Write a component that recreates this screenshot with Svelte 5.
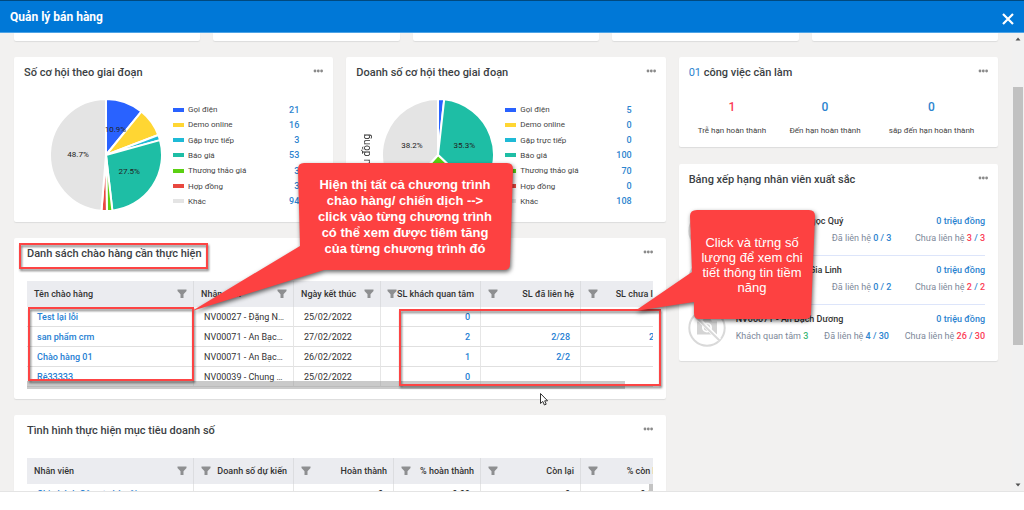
<script>
    const sliceColors = ["#2962ff", "#ffd633", "#1fbad6", "#1ebea5", "#5bd012", "#e8483f", "#e4e4e4"];
    const stages = ["Gọi điện", "Demo online", "Gặp trực tiếp", "Báo giá", "Thương thảo giá", "Hợp đồng", "Khác"];

    const charts = [
        { title: "Số cơ hội theo giai đoạn", values: [21, 16, 3, 53, 3, 3, 94], unit: "" },
        { title: "Doanh số cơ hội theo giai đoạn", values: [5, 0, 0, 100, 70, 0, 108], unit: "triệu đồng" },
    ];

    const tasks = [
        { count: 1, label: "Trễ hạn hoàn thành", late: true, grow: 4 },
        { count: 0, label: "Đến hạn hoàn thành", late: false, grow: 3 },
        { count: 0, label: "sắp đến hạn hoàn thành", late: false, grow: 5 },
    ];

    const staff = [
        { name: "NV00027 - Đặng Ngọc Quý", interested: 3, contacted: [0, 3], pending: [3, 3] },
        { name: "NV00039 - Chung Gia Linh", interested: 3, contacted: [0, 2], pending: [2, 2] },
        { name: "NV00071 - An Bạch Dương", interested: 3, contacted: [4, 30], pending: [26, 30] },
    ];

    const offerColumns = [
        { label: "Tên chào hàng", width: 167 },
        { label: "Nhân viên", width: 100 },
        { label: "Ngày kết thúc", width: 87 },
        { label: "SL khách quan tâm", width: 100, numeric: true },
        { label: "SL đã liên hệ", width: 100, numeric: true },
        { label: "SL chưa liên hệ", width: 103, numeric: true },
    ];

    const offers = [
        { name: "Test lại lỗi", owner: "NV00027 - Đặng Ngọc Quý", end: "25/02/2022", leads: "0", done: "", left: "" },
        { name: "san phẩm crm", owner: "NV00071 - An Bạch Dương", end: "27/02/2022", leads: "2", done: "2/28", left: "26/28" },
        { name: "Chào hàng 01", owner: "NV00071 - An Bạch Dương", end: "26/02/2022", leads: "1", done: "2/2", left: "" },
        { name: "Rê33333", owner: "NV00039 - Chung Gia Linh", end: "25/02/2022", leads: "0", done: "", left: "" },
    ];

    const goalColumns = [
        { label: "Nhân viên", width: 167 },
        { label: "Doanh số dự kiến", width: 100, numeric: true },
        { label: "Hoàn thành", width: 100, numeric: true },
        { label: "% hoàn thành", width: 87, numeric: true },
        { label: "Còn lại", width: 100, numeric: true },
        { label: "% còn lại", width: 88, numeric: true },
    ];

    function slices(values) {
        const total = values.reduce((a, b) => a + b, 0);
        let start = 0;
        return values
            .map((value, i) => {
                const from = start;
                start += value / total;
                return { from, to: start, share: value / total, color: sliceColors[i] };
            })
            .filter((s) => s.share > 0);
    }

    function point(share, r) {
        const a = share * 2 * Math.PI;
        return [56 + r * Math.sin(a), 56 - r * Math.cos(a)];
    }

    function arc({ from, to, share }) {
        const [x1, y1] = point(from, 56);
        const [x2, y2] = point(to, 56);
        return `M56 56 L${x1} ${y1} A56 56 0 ${share > 0.5 ? 1 : 0} 1 ${x2} ${y2} Z`;
    }
</script>

{#snippet more()}
    <button class="more" aria-label="Tùy chọn">
        <svg width="10" height="4" viewBox="0 0 10 4">
            <circle cx="2" cy="2" r="1.4" />
            <circle cx="5.3" cy="2" r="1.4" />
            <circle cx="8.6" cy="2" r="1.4" />
        </svg>
    </button>
{/snippet}

{#snippet head(columns)}
    <colgroup>
        {#each columns as col}
            <col style:width="{col.width}px" />
        {/each}
    </colgroup>
    <thead>
        <tr>
            {#each columns as col}
                <th>
                    <div class="th" class:numeric={col.numeric}>
                        <span>{col.label}</span>
                        <svg class="funnel" width="10" height="10" viewBox="0 0 10 10">
                            <path d="M0.5 0.5H9.5V2L6.5 5.2V9H3.5V5.2L0.5 2Z" />
                        </svg>
                    </div>
                </th>
            {/each}
        </tr>
    </thead>
{/snippet}

<div class="app">
    <header>
        <h1>Quản lý bán hàng</h1>
        <button class="close" aria-label="Đóng">
            <svg width="12" height="12" viewBox="0 0 12 12">
                <path d="M1 1L11 11M11 1L1 11" />
            </svg>
        </button>
    </header>

    <div class="body">
        <main>
            <div class="summary">
                {#each Array(5) as _}
                    <div class="card"></div>
                {/each}
            </div>

            <div class="dashboard">
                <div class="left">
                    <div class="charts">
                        {#each charts as chart}
                            <section class="card chart-card">
                                <div class="card-head">
                                    <h2>{chart.title}</h2>
                                    {@render more()}
                                </div>
                                <div class="chart">
                                    <span class="unit">{chart.unit}</span>
                                    <svg class="pie" width="112" height="112" viewBox="0 0 112 112">
                                        {#each slices(chart.values) as slice}
                                            <path d={arc(slice)} fill={slice.color} />
                                        {/each}
                                        {#each slices(chart.values) as slice}
                                            {#if slice.share > 0.1}
                                                {@const [x, y] = point((slice.from + slice.to) / 2, 28)}
                                                <text {x} y={y + 3}>{(slice.share * 100).toFixed(1)}%</text>
                                            {/if}
                                        {/each}
                                    </svg>
                                    <ul class="legend">
                                        {#each stages as stage, i}
                                            <li>
                                                <i style:background={sliceColors[i]}></i>
                                                <span>{stage}</span>
                                                <b>{chart.values[i]}</b>
                                            </li>
                                        {/each}
                                    </ul>
                                </div>
                            </section>
                        {/each}
                    </div>

                    <section class="card table-card">
                        <div class="card-head">
                            <h2>Danh sách chào hàng cần thực hiện</h2>
                            {@render more()}
                        </div>
                        <div class="grid-wrap">
                            <table>
                                {@render head(offerColumns)}
                                <tbody>
                                    {#each offers as offer}
                                        <tr>
                                            <td><a href="#offer">{offer.name}</a></td>
                                            <td>{offer.owner}</td>
                                            <td>{offer.end}</td>
                                            <td class="num">{offer.leads}</td>
                                            <td class="num">{offer.done}</td>
                                            <td class="num">{offer.left}</td>
                                        </tr>
                                    {/each}
                                </tbody>
                            </table>
                            <div class="hscroll"></div>
                        </div>
                    </section>

                    <section class="card table-card">
                        <div class="card-head">
                            <h2>Tình hình thực hiện mục tiêu doanh số</h2>
                            {@render more()}
                        </div>
                        <div class="grid-wrap">
                            <table>
                                {@render head(goalColumns)}
                                <tbody>
                                    <tr>
                                        <td><a href="#goal">Chi nhánh Công ty hà nội</a></td>
                                        <td class="num"></td>
                                        <td class="num dark">0</td>
                                        <td class="num dark">0.00</td>
                                        <td class="num dark">0</td>
                                        <td class="num dark">0.00</td>
                                    </tr>
                                </tbody>
                            </table>
                            <div class="vscroll"></div>
                        </div>
                    </section>
                </div>

                <div class="right">
                    <section class="card tasks-card">
                        <div class="card-head">
                            <h2><em>01</em> công việc cần làm</h2>
                            {@render more()}
                        </div>
                        <div class="tasks">
                            {#each tasks as task}
                                <div class="task" style:flex-grow={task.grow}>
                                    <strong class:late={task.late}>{task.count}</strong>
                                    <span>{task.label}</span>
                                </div>
                            {/each}
                        </div>
                    </section>

                    <section class="card rank-card">
                        <div class="card-head">
                            <h2>Bảng xếp hạng nhân viên xuất sắc</h2>
                            {@render more()}
                        </div>
                        <ul class="staff">
                            {#each staff as person}
                                <li>
                                    <svg class="avatar" width="38" height="38" viewBox="0 0 38 38">
                                        <circle cx="19" cy="19" r="17.7" fill="#fff" stroke="#d9d9d9" stroke-width="2" />
                                        <path d="M9 12.5h5l1.5-2.5h7l1.5 2.5h5v13H9z" fill="#d4d4d4" />
                                        <circle cx="19" cy="18.5" r="5" fill="#fff" />
                                        <circle cx="19" cy="18.5" r="3.2" fill="#d4d4d4" />
                                        <path d="M7.5 7L31.5 31" stroke="#fff" stroke-width="4" />
                                        <path d="M6.5 7L31.5 31.5" stroke="#d9d9d9" stroke-width="2" />
                                    </svg>
                                    <div class="info">
                                        <div class="line name">
                                            <strong>{person.name}</strong>
                                            <b class="blue">0 triệu đồng</b>
                                        </div>
                                        <div class="line">
                                            <span>Khách quan tâm <b class="green">{person.interested}</b></span>
                                            <span>Đã liên hệ <b class="blue">{person.contacted[0]} / {person.contacted[1]}</b></span>
                                            <span>
                                                Chưa liên hệ <b class="red">{person.pending[0]}</b>
                                                <b class="blue">/</b>
                                                <b class="red">{person.pending[1]}</b>
                                            </span>
                                        </div>
                                    </div>
                                </li>
                            {/each}
                        </ul>
                    </section>
                </div>
            </div>
        </main>

        <div class="scrollbar">
            <svg width="6" height="4" viewBox="0 0 6 4"><path d="M0.5 3.5L3 0.5L5.5 3.5Z" /></svg>
            <div class="thumb"></div>
            <svg width="6" height="4" viewBox="0 0 6 4"><path d="M0.5 0.5L3 3.5L5.5 0.5Z" /></svg>
        </div>
    </div>

    <!-- tutorial annotations laid over the dashboard -->
    <svg class="marks" width="1024" height="510" viewBox="0 0 1024 510">
        <g class="frames">
            <rect x="20" y="244" width="187" height="24" />
            <rect x="29" y="308" width="164" height="72" />
            <rect x="400" y="310" width="260" height="75" />
        </g>
        <g class="bubbles">
            <path d="M304 163H507Q513 163 513 169L510 264Q510 270 504 270H324L192 311L300 246L298 169Q298 163 304 163Z" />
            <path d="M697 210H809Q815 210 815 216L811 313Q811 319 805 319H699Q694 319 694 313V302L635 311L692 272L690 216Q690 210 697 210Z" />
        </g>
        <path class="cursor" d="M540.5 393.5V403.5L542.8 401.4L544.4 405L546.2 404.2L544.7 400.8H547.6Z" />
    </svg>
    <p class="note note-list">
        Hiện thị tất cả chương trình<br />chào hàng/ chiến dịch --&gt;<br />click vào từng chương trình<br />có thể xem
        được tiêm tăng<br />của từng chương trình đó
    </p>
    <p class="note note-count">Click và từng số<br />lượng để xem chi<br />tiết thông tin tiềm<br />năng</p>
</div>

<style>
    :global(body) {
        margin: 0;
        background: #fff;
    }

    .app {
        position: relative;
        height: 100vh;
        overflow: hidden;
        font-family: Roboto, sans-serif;
        font-size: 9px;
        color: #333;
    }

    h1,
    h2,
    p,
    ul {
        margin: 0;
        padding: 0;
        list-style: none;
    }

    button {
        padding: 0;
        border: 0;
        background: none;
        cursor: pointer;
        line-height: 0;
    }

    a {
        color: inherit;
        text-decoration: none;
    }

    header {
        display: flex;
        align-items: center;
        justify-content: space-between;
        box-sizing: border-box;
        height: 33px;
        padding: 0 10px;
        background: #0078d7;
        border-top: 1px solid #00497f;
        border-bottom: 1px solid #4da3e6;
        color: #fff;
    }

    h1 {
        font-size: 12px;
        line-height: 16px;
        font-weight: 700;
    }

    .close {
        padding-top: 4px;
    }

    .close path {
        stroke: #fff;
        stroke-width: 2.2;
    }

    .body {
        display: flex;
        height: calc(100vh - 52px);
        overflow: hidden;
        background: #f2f1f0;
        border-bottom: 1px solid #e4e4e4;
    }

    main {
        flex: 1;
        min-width: 0;
        padding: 0 14px;
    }

    .card {
        background: #fff;
        border-radius: 2px;
        box-shadow: 0 1px 1px #dcdcdc;
    }

    .summary {
        display: grid;
        grid-template-columns: repeat(5, 1fr);
        gap: 13px;
        margin-bottom: 16px;
    }

    .summary .card {
        height: 8px;
        border-radius: 0 0 2px 2px;
    }

    .dashboard {
        display: grid;
        grid-template-columns: repeat(3, minmax(0, 1fr));
        gap: 13px;
    }

    .left {
        grid-column: span 2;
        display: flex;
        flex-direction: column;
        gap: 16px;
    }

    .right {
        display: flex;
        flex-direction: column;
        gap: 17px;
    }

    .charts {
        display: grid;
        grid-template-columns: 1fr 1fr;
        gap: 13px;
    }

    .card-head {
        display: flex;
        justify-content: space-between;
        align-items: flex-start;
        padding: 8px 10px 0;
    }

    h2 {
        font-size: 11px;
        line-height: 16px;
        font-weight: 500;
        color: #3c3f44;
    }

    .more {
        padding-top: 4px;
    }

    .more circle {
        fill: #8a8a8a;
    }

    .chart {
        display: flex;
        padding: 18px 34px 11px 13px;
    }

    .unit {
        width: 16px;
        margin-right: 7px;
        padding-bottom: 2px;
        writing-mode: vertical-rl;
        transform: rotate(180deg);
        text-align: center;
        font-size: 10px;
        line-height: 16px;
    }

    .pie path {
        stroke: #fff;
        stroke-width: 2;
        stroke-linejoin: round;
    }

    .pie text {
        font-size: 8px;
        text-anchor: middle;
        fill: #222;
    }

    .legend {
        flex: 1;
        display: flex;
        flex-direction: column;
        padding: 3px 0 2px 11px;
    }

    .legend li {
        flex: 1;
        display: flex;
        align-items: center;
        color: #444;
        font-size: 8px;
    }

    .legend i {
        width: 11px;
        height: 4px;
        margin-right: 4px;
    }

    .legend b {
        margin-left: auto;
        color: #2d84cf;
        font-size: 9px;
        font-weight: 500;
    }

    .table-card .card-head {
        padding: 8px 13px 0;
    }

    .grid-wrap {
        position: relative;
        margin: 19px 13px 10px;
        height: 108px;
        overflow: hidden;
    }

    table {
        table-layout: fixed;
        width: 100%;
        border-collapse: separate;
        border-spacing: 0;
    }

    th {
        box-sizing: border-box;
        height: 26px;
        padding: 0 6px 0 7px;
        background: #ebecf0;
        border-right: 1px solid #dcdde0;
        font-weight: 500;
    }

    .th {
        display: flex;
        justify-content: space-between;
        align-items: center;
        white-space: nowrap;
    }

    .th.numeric {
        flex-direction: row-reverse;
    }

    .funnel {
        flex: none;
        fill: #8e8f91;
    }

    td {
        box-sizing: border-box;
        height: 20px;
        padding: 0 8px 0 10px;
        overflow: hidden;
        text-overflow: ellipsis;
        white-space: nowrap;
        border-right: 1px solid #e6e6e6;
        border-bottom: 1px solid #e0e0e0;
    }

    td a {
        color: #2680d3;
        font-weight: 500;
    }

    td.num {
        padding-right: 10px;
        text-align: right;
        color: #2680d3;
        font-weight: 500;
    }

    td.dark {
        color: #333;
    }

    .hscroll {
        position: absolute;
        left: 0;
        bottom: 0;
        width: 598px;
        height: 8px;
        background: rgba(150, 150, 150, 0.5);
    }

    .vscroll {
        position: absolute;
        right: 0;
        top: 26px;
        width: 4px;
        height: 60px;
        background: #c4c4c4;
    }

    .tasks {
        display: flex;
        padding: 18px 0 9px;
    }

    .task {
        flex: 1 1 0;
        display: flex;
        flex-direction: column;
        align-items: center;
        gap: 9px;
        line-height: 14px;
        white-space: nowrap;
        color: #444;
        font-size: 8px;
    }

    .task strong {
        font-size: 12px;
        line-height: 16px;
        font-weight: 500;
        color: #2d84cf;
    }

    .task strong.late {
        color: #fb3d56;
    }

    em {
        font-style: normal;
        font-weight: 400;
        color: #2d84cf;
    }

    .staff {
        padding: 24px 13px 9px 9px;
    }

    .staff li {
        display: flex;
        gap: 10px;
    }

    .avatar {
        flex: none;
    }

    .info {
        flex: 1;
        padding: 1px 0 8px;
    }

    .staff li + li .info {
        border-top: 1px solid #dde5fa;
        padding-top: 6px;
    }

    .staff li + li .avatar {
        margin-top: 5px;
    }

    .staff li:last-child .info {
        padding-bottom: 7px;
    }

    .line {
        display: flex;
        justify-content: space-between;
        line-height: 17px;
        white-space: nowrap;
        color: #7d8899;
    }

    .name {
        color: #333;
    }

    .line strong,
    .line b {
        font-weight: 500;
    }

    .line .blue {
        color: #2d84cf;
    }

    .line .red {
        color: #fb3d56;
    }

    .line .green {
        color: #3cb878;
    }

    .scrollbar {
        display: flex;
        flex-direction: column;
        align-items: center;
        box-sizing: border-box;
        width: 12px;
        padding: 4px 0;
        background: #f1f1f1;
    }

    .scrollbar path {
        fill: #505050;
    }

    .thumb {
        width: 10px;
        height: 258px;
        margin: 46px 0 auto;
        background: #c1c1c1;
    }

    .marks {
        position: absolute;
        left: 0;
        top: 0;
        pointer-events: none;
    }

    .frames rect {
        fill: none;
        stroke: #fd4444;
        stroke-width: 2;
        filter: drop-shadow(1px 2px 1px rgba(0, 0, 0, 0.5));
    }

    .bubbles path {
        fill: #fd4141;
        filter: drop-shadow(1px 2px 2px rgba(0, 0, 0, 0.6));
    }

    .cursor {
        fill: #fff;
        stroke: #333;
        stroke-width: 1;
    }

    .note {
        position: absolute;
        color: #fff;
        text-align: center;
        white-space: nowrap;
        font-family: "Liberation Sans", Arial, sans-serif;
        font-size: 13px;
    }

    .note-list {
        left: 298px;
        top: 177px;
        width: 214px;
        font-weight: 700;
        line-height: 16px;
    }

    .note-count {
        left: 691px;
        top: 235px;
        width: 122px;
        line-height: 15px;
    }
</style>
